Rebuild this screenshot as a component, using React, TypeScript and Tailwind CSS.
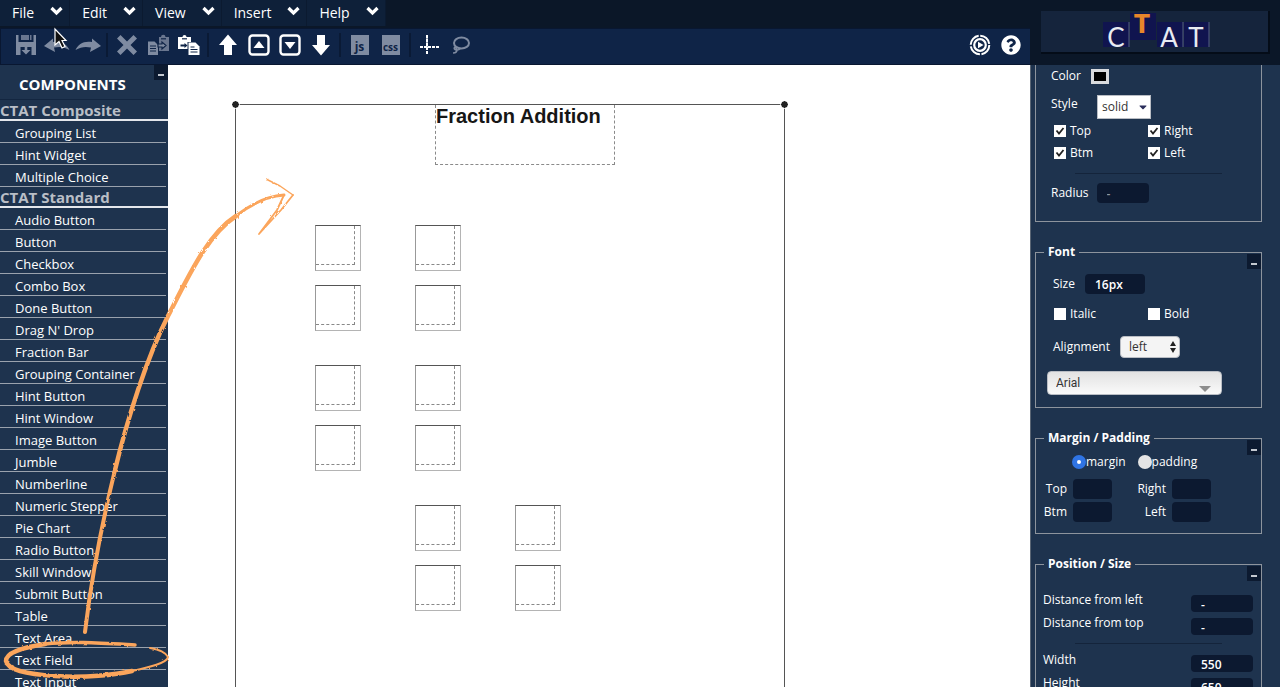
import React from "react";
import { FaCaretDown, FaQuestionCircle } from "react-icons/fa";

const menus = ["File", "Edit", "View", "Insert", "Help"];

const composite = ["Grouping List", "Hint Widget", "Multiple Choice"];

const standard = [
  "Audio Button",
  "Button",
  "Checkbox",
  "Combo Box",
  "Done Button",
  "Drag N' Drop",
  "Fraction Bar",
  "Grouping Container",
  "Hint Button",
  "Hint Window",
  "Image Button",
  "Jumble",
  "Numberline",
  "Numeric Stepper",
  "Pie Chart",
  "Radio Button",
  "Skill Window",
  "Submit Button",
  "Table",
  "Text Area",
  "Text Field",
  "Text Input",
];

function Icon({ children }: { children: React.ReactNode }) {
  return (
    <svg width="22" height="22" viewBox="0 0 22 22" fill="currentColor" aria-hidden="true">
      {children}
    </svg>
  );
}

function Tool({ label, dim, children }: { label: string; dim?: boolean; children: React.ReactNode }) {
  return (
    <button
      type="button"
      aria-label={label}
      className={dim ? "flex h-8 w-[31px] items-center justify-center text-[#7f8ba1]" : "flex h-8 w-[31px] items-center justify-center text-white"}
    >
      {children}
    </button>
  );
}

function Divider() {
  return <div className="mx-[3px] h-6 w-0.5 bg-[#0a1a35]" />;
}

function MenuBar() {
  return (
    <nav className="flex h-[26px] self-start bg-[#0e2039]">
      {menus.map((m) => (
        <button key={m} type="button" className="flex items-center gap-4 border-r border-[#0b1a30] pr-1.5 pl-3 text-sm leading-5 font-medium">
          {m}
          <svg width="13" height="10" viewBox="0 0 13 10" className="mb-1" aria-hidden="true">
            <path d="M1.500 2 L6.500 7 L11.500 2" fill="none" stroke="#fff" strokeWidth="3.200" />
          </svg>
        </button>
      ))}
    </nav>
  );
}

function Toolbar() {
  return (
    <div className="mt-0.5 flex h-[37px] items-center border-t border-b border-l border-[#091731] bg-[#0f2447] pr-1 pb-[3px] pl-[9px]">
      <Tool label="Save" dim>
        <Icon>
          <path d="M1 1h2.500v7h15V1H21v20h-4.500v-8h-11v8H1z" />
          <path d="M6 1h8v5H6zM15 1h1.500v5H15z" opacity=".8" />
          <path d="M9.700 11h2.600v5h3.200L11 20.500 6.500 16h3.200z" />
        </Icon>
      </Tool>
      <Tool label="Undo" dim>
        <svg width="26" height="16" viewBox="0 0 26 16" fill="currentColor" aria-hidden="true">
          <path d="M0 9 9 1.500V5C17 3.500 23 7 25.500 13 20 9.500 15 9.500 10 10.500L11 15z" />
        </svg>
      </Tool>
      <Tool label="Redo" dim>
        <svg width="26" height="16" viewBox="0 0 26 16" fill="currentColor" aria-hidden="true">
          <path d="M26 9 17 1.500V5C9 3.500 3 7 .5 13 6 9.500 11 9.500 16 10.500L15 15z" />
        </svg>
      </Tool>
      <Divider />
      <Tool label="Delete" dim>
        <Icon>
          <path d="M4.500 1 11 7.500 17.500 1 21 4.500 14.500 11 21 17.500 17.500 21 11 14.500 4.500 21 1 17.500 7.500 11 1 4.500z" />
        </Icon>
      </Tool>
      <Tool label="Copy" dim>
        <Icon>
          <path d="M11 3h3a2 2 0 0 1 4.500 0H22v14H12V3z" opacity=".8" />
          <path d="M14 4.800h5" stroke="#0f2447" strokeWidth="1.200" />
          <path d="M1 7.500h6.500l3.500 3.500v10H1z" />
          <path d="M3 12h6M3 14.500h6M3 17h6" stroke="#0f2447" strokeWidth="1.100" />
          <path d="M11 10h4V8l4 3.500-4 3.500v-2h-4z" stroke="#0f2447" strokeWidth="1.200" />
        </Icon>
      </Tool>
      <Tool label="Paste">
        <Icon>
          <path d="M0 3h4.500a2 2 0 0 1 4 0H13v5H9.500v7H0z" />
          <path d="M4 4.800h5" stroke="#0f2447" strokeWidth="1.200" />
          <path d="M2.500 10.500h4V9l3 2.500-3 2.500v-1.500h-4z" fill="#0f2447" />
          <path d="M10.500 8.500h7l4 4V21h-11z" />
          <path d="M12.500 13h4M12.500 15.500h7M12.500 18h7" stroke="#0f2447" strokeWidth="1.100" />
        </Icon>
      </Tool>
      <Divider />
      <Tool label="Move to front">
        <Icon>
          <path d="M11 .5 20 11h-5v10H7V11H2z" />
        </Icon>
      </Tool>
      <Tool label="Move forward">
        <Icon>
          <rect x="1.500" y="1.500" width="19" height="19" rx="3" fill="none" stroke="currentColor" strokeWidth="2.400" />
          <path d="M11 7l5.500 7h-11z" />
        </Icon>
      </Tool>
      <Tool label="Move backward">
        <Icon>
          <rect x="1.500" y="1.500" width="19" height="19" rx="3" fill="none" stroke="currentColor" strokeWidth="2.400" />
          <path d="M11 15l5.500-7h-11z" />
        </Icon>
      </Tool>
      <Tool label="Move to back">
        <Icon>
          <path d="M11 21.500 20 11h-5V1H7v10H2z" />
        </Icon>
      </Tool>
      <Divider />
      <Tool label="Edit JavaScript" dim>
        <span className="flex h-5 w-[18px] items-center justify-center bg-[#7f8ba1] pt-1 font-['Open_Sans',sans-serif] text-xs leading-4 font-bold text-[#0f2447]">js</span>
      </Tool>
      <Tool label="Edit CSS" dim>
        <span className="flex h-5 w-[18px] items-center justify-center bg-[#7f8ba1] pt-1 font-['Open_Sans',sans-serif] text-[10px] leading-4 font-bold text-[#0f2447]">css</span>
      </Tool>
      <Divider />
      <Tool label="Grid">
        <Icon>
          <path d="M8 1v20" stroke="currentColor" strokeWidth="2" strokeDasharray="3 1" />
          <path d="M8 1v12" stroke="currentColor" strokeWidth="2" opacity=".6" />
          <path d="M1 13h20" stroke="currentColor" strokeWidth="2" strokeDasharray="3 1" />
        </Icon>
      </Tool>
      <Tool label="Lasso" dim>
        <Icon>
          <g fill="none" stroke="currentColor" strokeWidth="2">
            <ellipse cx="11.500" cy="9" rx="7.500" ry="5.500" />
            <path d="M3 19c3 0 4.500-1.500 3.500-4.500-1-2-3-1-2 .5s4 1.500 6-.5" strokeWidth="1.600" />
          </g>
        </Icon>
      </Tool>
      <div className="ml-auto flex">
        <Tool label="Preview">
          <Icon>
            <circle cx="11" cy="11" r="9.300" fill="none" stroke="currentColor" strokeWidth="2" strokeDasharray="13 1.600" />
            <circle cx="11" cy="11" r="5.800" fill="none" stroke="currentColor" strokeWidth="2.200" />
            <path d="M9 7.800 14.500 11 9 14.200z" />
          </Icon>
        </Tool>
        <Tool label="Help">
          <FaQuestionCircle size={20} />
        </Tool>
      </div>
    </div>
  );
}

function Category({ title, items }: { title: string; items: string[] }) {
  return (
    <section>
      <h3 className="h-[21px] border-b-2 border-[#e4e7ec] text-[15px] leading-5 font-bold whitespace-nowrap text-[#b9bec6]">{title}</h3>
      <ul>
        {items.map((i) => (
          <li key={i} className="mr-0.5 h-[22px] border-b border-[#9aa2ad]">
            <button type="button" className="block w-full pl-[15px] text-left text-[13px] leading-6 font-medium whitespace-nowrap">
              {i}
            </button>
          </li>
        ))}
      </ul>
    </section>
  );
}

function Collapse({ label }: { label: string }) {
  return (
    <button type="button" aria-label={label} className="absolute top-0 right-0 flex h-[15px] w-3.5 items-end justify-center bg-[#0c1a30] pb-1">
      <span className="h-0.5 w-1.5 bg-[#c3c8d0]" />
    </button>
  );
}

function Sidebar() {
  return (
    <aside className="relative w-[168px] shrink-0 overflow-hidden bg-[#1e334e]">
      <Collapse label="Collapse components" />
      <h2 className="h-[35px] border-b border-[#132640] pl-[19px] text-[15px] leading-[38px] font-bold">COMPONENTS</h2>
      <Category title="CTAT Composite" items={composite} />
      <Category title="CTAT Standard" items={standard} />
    </aside>
  );
}

// Offsets of the text fields inside the interface, in pixels from its top left corner.
const fields = [
  [80, 120], [180, 120], [80, 180], [180, 180],
  [80, 260], [180, 260], [80, 320], [180, 320],
  [180, 400], [280, 400], [180, 460], [280, 460],
];

function Stage() {
  return (
    <main className="relative flex-1 overflow-hidden bg-white font-['Liberation_Sans',Arial,sans-serif] text-[#161616]">
      <div className="absolute top-[39px] left-[67px] h-[650px] w-[550px] border border-[#555]">
        <span className="absolute -top-1 -left-1 size-[7px] rounded-full bg-[#222] outline outline-white" />
        <span className="absolute -top-1 -right-1 size-[7px] rounded-full bg-[#222] outline outline-white" />
        <div className="absolute top-0 left-[199px] h-[60px] w-[180px] border border-t-0 border-dashed border-[#8a8a8a]">
          <h1 className="text-xl leading-[22px] font-bold">Fraction Addition</h1>
        </div>
        {fields.map(([x, y]) => (
          <div key={`${x}-${y}`} style={{ left: x - 1, top: y }} className="absolute size-[46px] border border-[#b4b4b4] border-t-[#555] border-l-[#999]">
            <div className="size-[39px] border border-t-0 border-l-0 border-dashed border-[#888]" />
          </div>
        ))}
      </div>
    </main>
  );
}

function Logo() {
  return (
    <div className="m-2.5 ml-[11px] flex h-[43px] items-center justify-center border-r-2 border-b-2 border-[#040c18] bg-[#15243c] pl-0.5">
      <svg width="108" height="38" viewBox="0 0 108 38" role="img" aria-label="CTAT">
        <path d="M1 9h26v25H1zM28 0h26v27H28zM55 9h26v25H55zM82 9h25v25H82z" fill="#10144f" />
        <path d="M27 9v25M81 9v25M107 9v25" stroke="#566084" />
        <g className="font-['Lato',sans-serif]" fontSize="26" fill="#e8ebf2" textAnchor="middle">
          <text x="14" y="34">C</text>
          <text x="67" y="34">A</text>
          <text x="94" y="34">T</text>
        </g>
        <text x="40" y="20" fontSize="26" fontWeight="900" fill="#e8862a" textAnchor="middle" className="font-['Roboto',sans-serif]">T</text>
      </svg>
    </div>
  );
}

function Check({ label, checked }: { label: string; checked?: boolean }) {
  return (
    <label className="flex h-[22px] w-[94px] items-center gap-1">
      <span className="relative size-3">
        <input type="checkbox" defaultChecked={checked} className="peer block size-3 appearance-none bg-white" />
        <svg viewBox="0 0 12 12" className="pointer-events-none absolute inset-0 hidden size-3 peer-checked:block" aria-hidden="true">
          <path d="M2.500 5.500 5 8.500 9.500 3" fill="none" stroke="#222" strokeWidth="1.800" />
        </svg>
      </span>
      {label}
    </label>
  );
}

function Field({ label, title, children }: { label?: string; title?: string; children: React.ReactNode }) {
  return (
    <fieldset className="relative mt-[22px] border border-[#8d949d] first:mt-0 first:border-t-0">
      {title && <legend className="ml-2 px-1 leading-4 font-bold">{title}</legend>}
      {label && (
        <div className="absolute -top-1.5 right-0 h-4 w-4">
          <Collapse label={label} />
        </div>
      )}
      {children}
    </fieldset>
  );
}

const box = "h-5 rounded bg-[#0c1930] text-xs font-semibold text-white";

function Rule() {
  return <hr className="mr-[39px] ml-[39px] border-[#14243b]" />;
}

function Edge({ label, narrow }: { label: string; narrow?: boolean }) {
  return (
    <label className={narrow ? "flex w-[76px] items-center justify-end gap-[6px]" : "flex w-[99px] items-center justify-end gap-[6px]"}>
      {label}
      <input className="h-5 w-[39px] rounded bg-[#0c1930] px-2 text-white" />
    </label>
  );
}

function Measure({ label, value }: { label: string; value: string }) {
  return (
    <label className="flex h-[23px] items-start justify-between pr-2 pl-[7px] leading-4">
      {label}
      <input defaultValue={value} className="mt-[3px] h-[17px] w-[62px] rounded bg-[#0c1930] px-2.5 pt-px text-xs font-semibold text-white" />
    </label>
  );
}

function Properties() {
  return (
    <aside className="min-h-0 flex-1 overflow-hidden border-l border-[#5a6675] bg-[#1e334e] pr-[18px] pl-1 text-xs font-medium whitespace-nowrap">
      <Field>
        <label className="flex h-[22px] items-center gap-2.5 pl-[15px]">
          Color
          <input type="button" aria-label="Border color" className="h-[15px] w-[18px] border-[3px] border-[#d9dbde] bg-black" />
        </label>
        <div className="flex h-[33px] items-center pl-[15px]">
          <label htmlFor="style" className="w-[46px]">Style</label>
          <span className="relative mt-[6px]">
            <select id="style" defaultValue="solid" className="block h-6 w-[54px] appearance-none border border-[#b9bdc4] bg-white pl-1 text-xs font-normal text-[#333]">
              <option>solid</option>
            </select>
            <FaCaretDown size={12} className="pointer-events-none absolute top-1.5 right-0.5 text-[#2b2f5c]" />
          </span>
        </div>
        <div className="flex flex-wrap pl-[18px]">
          <Check label="Top" checked />
          <Check label="Right" checked />
          <Check label="Btm" checked />
          <Check label="Left" checked />
        </div>
        <div className="pt-[9px] pb-[9px]"><Rule /></div>
        <label className="flex items-center gap-2 pb-[18px] pl-[15px]">
          Radius
          <input placeholder="-" className={`${box} w-[52px] px-2.5 placeholder:text-[#8f98a6]`} />
        </label>
      </Field>

      <Field title="Font" label="Collapse font">
        <label className="flex items-center gap-2.5 pt-3.5 pl-[17px]">
          Size
          <input defaultValue="16px" className={`${box} w-[60px] px-2.5`} />
        </label>
        <div className="flex pt-[9px] pl-[18px]">
          <Check label="Italic" />
          <Check label="Bold" />
        </div>
        <div className="flex items-center gap-2.5 pt-[11px] pl-[17px]">
          <label htmlFor="align">Alignment</label>
          <span className="relative">
            <select id="align" defaultValue="left" className="block h-[22px] w-[60px] appearance-none rounded border border-[#b9bdc4] bg-[#f4f4f4] pl-2 text-xs font-normal text-[#333]">
              <option>left</option>
            </select>
            <svg width="6" height="12" viewBox="0 0 6 12" className="pointer-events-none absolute top-[5px] right-1" aria-hidden="true">
              <path d="M0 5 3 0l3 5zM0 7l3 5 3-5z" fill="#222" />
            </svg>
          </span>
        </div>
        <div className="relative mt-[13px] mr-[39px] mb-3 ml-[11px]">
          <select aria-label="Font family" defaultValue="Arial" className="block h-6 w-full appearance-none rounded border border-[#b9bdc4] bg-linear-to-b from-[#e2e2e2] to-[#fafafa] pl-2 font-['Roboto',sans-serif] text-xs font-normal text-[#333]">
            <option>Arial</option>
          </select>
          <svg width="12" height="6" viewBox="0 0 12 6" className="pointer-events-none absolute right-[11px] bottom-[3px]" aria-hidden="true">
            <path d="M0 0h12L6 6z" fill="#8d8d8d" />
          </svg>
        </div>
      </Field>

      <Field title="Margin / Padding" label="Collapse margin and padding">
        <div className="flex h-[33px] items-start gap-3 pt-2 pl-9 leading-4">
          <label className="flex items-center">
            <input type="radio" name="mp" defaultChecked className="size-3.5 appearance-none rounded-full border-[#2f74e4] bg-[#e4e7ee] checked:border-[5px] checked:bg-white" />
            margin
          </label>
          <label className="flex items-center">
            <input type="radio" name="mp" className="size-3.5 appearance-none rounded-full border-[#2f74e4] bg-[#e4e4e4] checked:border-[5px]" />
            padding
          </label>
        </div>
        <div className="flex flex-wrap gap-y-[3px] pb-[11px]">
          <Edge label="Top" narrow />
          <Edge label="Right" />
          <Edge label="Btm" narrow />
          <Edge label="Left" />
        </div>
      </Field>

      <Field title="Position / Size" label="Collapse position and size">
        <div className="pt-5">
          <Measure label="Distance from left" value="-" />
          <Measure label="Distance from top" value="-" />
        </div>
        <div className="pt-[5px] pb-2"><Rule /></div>
        <Measure label="Width" value="550" />
        <Measure label="Height" value="650" />
      </Field>
    </aside>
  );
}

function Annotation() {
  return (
    <svg width="310" height="687" viewBox="0 0 310 687" className="pointer-events-none absolute top-0 left-0" aria-hidden="true">
      <filter id="chalk" x="-10%" y="-10%" width="120%" height="120%">
        <feTurbulence type="fractalNoise" baseFrequency=".25" numOctaves="2" seed="4" />
        <feDisplacementMap in="SourceGraphic" scale="2.500" />
      </filter>
      <g filter="url(#chalk)" fill="none" stroke="#fba55b" strokeLinecap="round" strokeLinejoin="round">
        <path d="M85 632C90 590 101 527 115 470" strokeWidth="4" />
        <path d="M115 470C127 420 147 357 168 316S208 234 236 216" strokeWidth="4.500" />
        <path d="M236 216C250 205 266 196 284 195" strokeWidth="3" />
        <path d="M284 195 277 210 259 234 281 210 293 195" strokeWidth="1.800" />
        <path d="M293 195 280 186 266 179" strokeWidth="1.400" />
        <path d="M135 645C100 643 72 641 45 644" strokeWidth="3.500" />
        <path d="M45 644C20 648 6 653 6 661C8 670 25 674 55 676C85 678 115 675 132 671" strokeWidth="4.500" />
        <path d="M132 671C150 667 167 663 168 657C165 652 160 650 150 648" strokeWidth="2" />
      </g>
      <path d="M55 29v16l4-3.500 3 6.500 3-1.500-3-6h4z" fill="#111" stroke="#fff" strokeWidth="1.200" />
    </svg>
  );
}

export default function App() {
  return (
    <div className="relative flex h-screen overflow-hidden bg-[#0b1728] font-['Open_Sans',sans-serif] text-white">
      <div className="flex min-w-0 flex-1 flex-col">
        <MenuBar />
        <Toolbar />
        <div className="flex min-h-0 flex-1">
          <Sidebar />
          <Stage />
        </div>
      </div>
      <div className="flex w-[250px] shrink-0 flex-col">
        <header className="h-[65px] pt-px"><Logo /></header>
        <Properties />
      </div>
      <Annotation />
    </div>
  );
}
